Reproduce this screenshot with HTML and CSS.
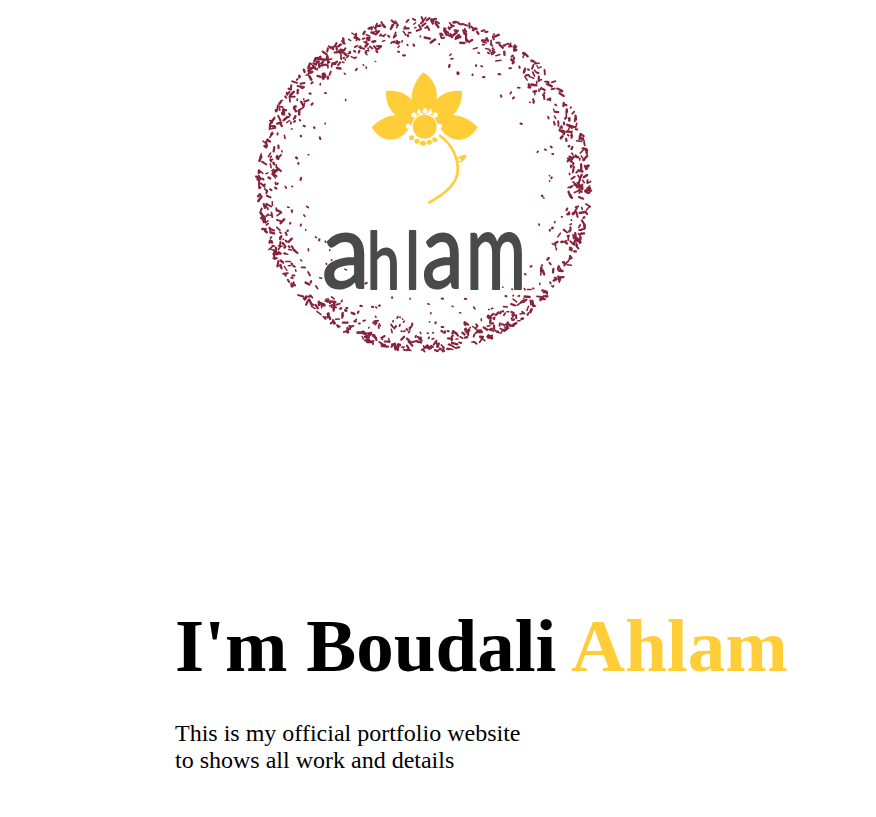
FILE: index.html
```html
<!DOCTYPE html>
<html lang="en">
<head>
<meta charset="utf-8">
<title>Boudali Ahlam</title>
<link rel="stylesheet" href="styles.css">
</head>
<body>
<main class="hero">
  <div class="logo-row">
    <svg class="logo" viewBox="0 0 350 350" width="350" height="350" role="img" aria-label="ahlam logo">
      <g id="ring" class="ring"></g>
      <g transform="translate(110 55) scale(0.3333)">
        <g class="flower">
          <path d="M190 22C216 38 234 66 230 100C228 122 214 138 200 156H178C160 136 152 112 156 86C160 60 174 38 190 22Z"/>
          <path d="M78 78C114 74 152 88 168 124L180 160L150 172C100 160 76 124 78 78Z"/>
          <path d="M306 78C270 74 232 88 216 124L204 160L234 172C284 160 308 124 306 78Z"/>
          <path d="M35 187C60 160 95 146 128 151L170 170L150 182C140 208 114 226 85 224C64 222 46 206 35 187Z"/>
          <path d="M353 187C328 160 293 146 260 151L218 170L238 182C248 208 274 226 303 224C324 222 342 206 353 187Z"/>
        </g>
        <circle class="gap" cx="194" cy="184" r="39"/>
        <path class="gap" d="M176 130L186 146L170 146ZM212 130L202 146L218 146Z"/>
        <circle class="petal-fill" cx="194" cy="185" r="36"/>
        <path class="petal-fill" d="M188 148L192 130L196 148Z"/>
        <g class="gap">
          <circle cx="195" cy="137" r="7.5"/><circle cx="162" cy="150" r="7.5"/><circle cx="226" cy="150" r="7.5"/>
          <circle cx="145" cy="184" r="7.5"/><circle cx="238" cy="184" r="7.5"/>
        </g>
        <g class="petal-fill">
          <circle cx="155" cy="218" r="7.5"/><circle cx="171" cy="229" r="7.5"/><ellipse cx="189" cy="235" rx="9.5" ry="7.5"/>
          <circle cx="208" cy="232" r="7.5"/><circle cx="224" cy="224" r="7.5"/>
        </g>
        <path class="stem" d="M237 210C275 235 296 280 293 320C290 360 250 390 205 414"/>
        <path class="petal-fill" d="M288 292C292 276 305 267 320 270C317 285 304 296 288 292Z"/>
        <circle class="gap" cx="298" cy="284" r="4.5"/>
      </g>
      <text class="wordmark big" transform="translate(72 278) scale(0.92 1)">a</text>
      <text class="wordmark small" transform="translate(117 279) scale(0.74 1)">h</text>
      <text class="wordmark small" transform="translate(155 279) scale(0.8 1)">l</text>
      <text class="wordmark big" transform="translate(172 278) scale(0.8 1)">a</text>
      <text class="wordmark big" transform="translate(216 279) scale(0.7 1.04)">m</text>
    </svg>
  </div>
  <h1 class="title">I'm Boudali <span class="accent">Ahlam</span></h1>
  <p class="lede">This is my official portfolio website<br>to shows all work and details</p>
</main>
<script src="script.js"></script>
</body>
</html>
```

FILE: styles.css
```css
html, body {
  margin: 0;
  padding: 0;
  background: #ffffff;
}

.hero {
  padding: 10px 0 0 175px;
  font-family: "Liberation Serif", "Times New Roman", serif;
  color: #000000;
}

.logo-row {
  margin-left: 75px;
  height: 350px;
}

.logo {
  display: block;
}

.ring {
  stroke: #86233a;
  stroke-linecap: round;
  fill: none;
}

.flower, .petal-fill {
  fill: #ffcd38;
}

.gap {
  fill: #ffffff;
}

.stem {
  fill: none;
  stroke: #ffcd38;
  stroke-width: 8;
}

.wordmark {
  font-family: Lato, "Noto Sans", sans-serif;
  fill: #4a4a4a;
  stroke: #4a4a4a;
  stroke-width: 2;
  stroke-linejoin: round;
}

.wordmark.big {
  font-size: 104px;
}

.wordmark.small {
  font-size: 80px;
}

.title {
  margin: 244px 0 0;
  font-size: 75px;
  line-height: 83px;
  font-weight: 700;
  white-space: nowrap;
}

.accent {
  color: #ffcd38;
}

.lede {
  margin: 33px 0 0;
  font-size: 24px;
  line-height: 27px;
}
```

FILE: script.js
```js
// Draws the stippled ring of the logo with a seeded generator, so every load is identical.
(function () {
  var seed = 48271;
  function rnd() {
    seed = (seed * 16807) % 2147483647;
    return (seed - 1) / 2147483646;
  }
  var ring = document.getElementById("ring");
  var cx = 174, cy = 175, outer = 167;
  var parts = [];
  function dash(a, r, len, w, skew) {
    var x = cx + Math.cos(a) * r, y = cy + Math.sin(a) * r;
    var d = a + Math.PI / 2 + skew;
    var dx = Math.cos(d) * len / 2, dy = Math.sin(d) * len / 2;
    parts.push('<line x1="' + (x - dx).toFixed(1) + '" y1="' + (y - dy).toFixed(1) +
      '" x2="' + (x + dx).toFixed(1) + '" y2="' + (y + dy).toFixed(1) +
      '" stroke-width="' + w.toFixed(1) + '"/>');
  }
  var i;
  // Dense, nearly continuous outer rim
  for (i = 0; i < 820; i++) {
    var a = rnd() * Math.PI * 2;
    var depth = Math.pow(rnd(), 1.8) * 22;
    dash(a, outer - 1 - depth, 1 + rnd() * 4.5, 1.4 + rnd() * 1.2, (rnd() - 0.5) * 2.6);
  }
  // Sparse dots fading towards the centre
  for (i = 0; i < 240; i++) {
    var b = rnd() * Math.PI * 2;
    var inner = 14 + Math.pow(rnd(), 1.7) * 40;
    dash(b, outer - inner, 0.4 + rnd() * 1.6, 1.4 + rnd() * 0.9, rnd() * 3);
  }
  ring.innerHTML = parts.join("");
})();
```
